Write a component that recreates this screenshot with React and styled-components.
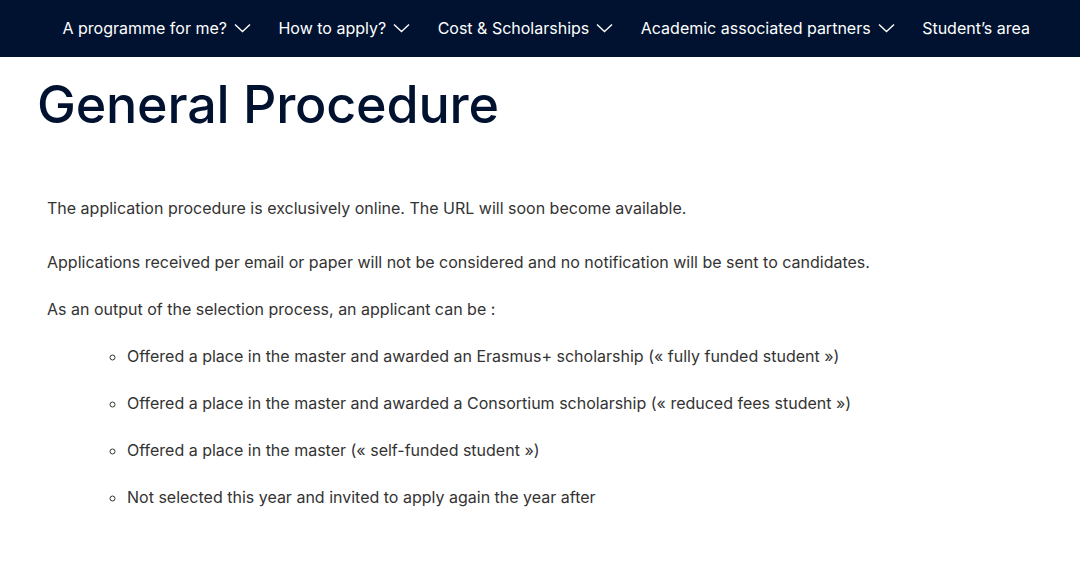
import React from 'react';
import styled, { createGlobalStyle } from 'styled-components';

const GlobalStyle = createGlobalStyle`
  body {
    margin: 0;
    background: #ffffff;
    font-family: 'Inter', 'Liberation Sans', sans-serif;
  }
`;

const Nav = styled.nav`
  background-color: #001230;
  height: 57px;
  display: flex;
  justify-content: flex-end;
  align-items: center;
  padding-right: 50px;
`;

const NavLinks = styled.ul`
  list-style: none;
  display: flex;
  align-items: center;
  gap: 27.5px;
  margin: 0 0 2px;
  padding: 0;
`;

const NavItem = styled.li`
  display: flex;
  align-items: center;
  gap: 7px;
  color: #ffffff;
  font-size: 16px;
  font-weight: 400;
  white-space: nowrap;
`;

const Main = styled.main`
  padding: 0 37px;
`;

const Title = styled.h1`
  margin: 16px 0 0;
  font-size: 52px;
  font-weight: 500;
  line-height: 64px;
  color: #001230;
  letter-spacing: -0.2px;
`;

const Content = styled.div`
  padding: 59px 0 0 10px;
  color: #333333;
  font-size: 16px;
  line-height: 24px;
`;

const Paragraph = styled.p`
  margin: 0 0 ${({ $gap }) => $gap || 23}px;
`;

const List = styled.ul`
  list-style: circle;
  margin: 0;
  padding-left: 80px;
`;

const ListItem = styled.li`
  margin-bottom: 23px;
`;

const Chevron = () => (
  <svg width="17" height="10" viewBox="0 0 17 10" fill="none">
    <path d="M1 1.5L8.5 8.5L16 1.5" stroke="#ffffff" strokeWidth="1.4" />
  </svg>
);

const menu = [
  { label: 'A programme for me?', drop: true },
  { label: 'How to apply?', drop: true },
  { label: 'Cost & Scholarships', drop: true },
  { label: 'Academic associated partners', drop: true },
  { label: 'Student’s area', drop: false },
];

const outcomes = [
  'Offered a place in the master and awarded an Erasmus+ scholarship (« fully funded student »)',
  'Offered a place in the master and awarded a Consortium scholarship (« reduced fees student »)',
  'Offered a place in the master (« self-funded student »)',
  'Not selected this year and invited to apply again the year after',
];

const App = () => (
  <>
    <GlobalStyle />
    <Nav>
      <NavLinks>
        {menu.map((item) => (
          <NavItem key={item.label}>
            {item.label}
            {item.drop && <Chevron />}
          </NavItem>
        ))}
      </NavLinks>
    </Nav>
    <Main>
      <Title>General Procedure</Title>
      <Content>
        <Paragraph $gap={30}>
          The application procedure is exclusively online. The URL will soon become available.
        </Paragraph>
        <Paragraph>
          Applications received per email or paper will not be considered and no notification will be sent to candidates.
        </Paragraph>
        <Paragraph>As an output of the selection process, an applicant can be :</Paragraph>
        <List>
          {outcomes.map((text) => (
            <ListItem key={text}>{text}</ListItem>
          ))}
        </List>
      </Content>
    </Main>
  </>
);

export default App;
